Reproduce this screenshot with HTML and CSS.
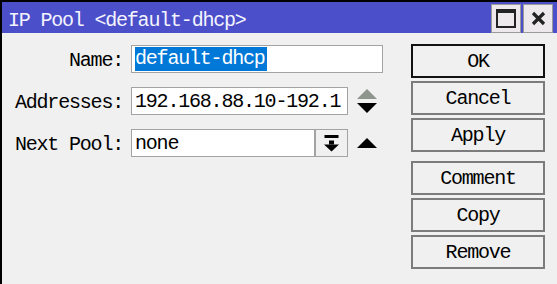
FILE: index.html
```html
<!DOCTYPE html>
<html lang="en">
<head>
  <meta charset="UTF-8">
  <title>IP Pool &lt;default-dhcp&gt;</title>
  <link rel="stylesheet" href="styles.css">
</head>
<body>
  <div class="window">
    <div class="titlebar">
      <span class="title">IP Pool &lt;default-dhcp&gt;</span>
      <div class="title-buttons">
        <button class="tb-btn" title="Maximize">
          <svg width="20" height="19" viewBox="0 0 20 19">
            <rect x="1" y="1" width="18" height="17" fill="none" stroke="#222" stroke-width="2"/>
            <rect x="1" y="1" width="18" height="3" fill="#222"/>
          </svg>
        </button>
        <button class="tb-btn" title="Close">
          <svg width="15" height="15" viewBox="0 0 15 15">
            <path d="M2 2 L13 13 M13 2 L2 13" stroke="#222" stroke-width="3.2" fill="none"/>
          </svg>
        </button>
      </div>
    </div>

    <div class="content">
      <div class="form">
        <div class="row">
          <label class="label">Name:</label>
          <div class="field field-name"><span class="selected">default-dhcp</span></div>
        </div>
        <div class="row">
          <label class="label">Addresses:</label>
          <div class="field field-addr">192.168.88.10-192.1</div>
          <svg class="side-icon" width="20" height="25" viewBox="0 0 20 25">
            <polygon points="0,10 10,0 20,10" fill="#8d958d"/>
            <polygon points="0,14 20,14 10,24" fill="#000"/>
          </svg>
        </div>
        <div class="row">
          <label class="label">Next Pool:</label>
          <div class="field field-pool">none</div>
          <div class="dropdown">
            <svg width="16" height="17" viewBox="0 0 16 17">
              <rect x="0.5" y="0" width="14" height="3" fill="#000"/>
              <rect x="5" y="5.5" width="5" height="4" fill="#000"/>
              <polygon points="0,9.5 15,9.5 7.5,16.5" fill="#000"/>
            </svg>
          </div>
          <svg class="side-icon" width="20" height="11" viewBox="0 0 20 11">
            <polygon points="0,10 10,0 20,10" fill="#000"/>
          </svg>
        </div>
      </div>

      <div class="actions">
        <button class="btn btn-default">OK</button>
        <button class="btn">Cancel</button>
        <button class="btn">Apply</button>
        <button class="btn group-start">Comment</button>
        <button class="btn">Copy</button>
        <button class="btn">Remove</button>
      </div>
    </div>
  </div>
</body>
</html>
```

FILE: styles.css
```css
body {
  margin: 0;
  padding: 0;
  background-color: #f0f0f0;
  font-family: "Liberation Mono", "Noto Sans CJK SC", monospace;
  font-size: 20px;
  letter-spacing: -1.2px;
  color: #000;
  overflow: hidden;
}

.window {
  width: 555px;
  height: 282px;
  border-left: 2px solid #000;
  border-top: 2px solid #000;
  background: #f0f0f0;
}

.titlebar {
  height: 31px;
  background: #4b4fc9;
  display: flex;
  justify-content: space-between;
  align-items: flex-start;
}

.title {
  color: #f4f4ff;
  padding-left: 6px;
  padding-top: 3px;
  line-height: 31px;
}

.title-buttons {
  display: flex;
  gap: 2px;
  padding-top: 2px;
  padding-right: 4px;
}

.tb-btn {
  width: 30px;
  height: 29px;
  padding: 0;
  background: #ece8ec;
  border: 1px solid #9a9a9a;
  display: flex;
  align-items: center;
  justify-content: center;
}

.content {
  display: flex;
  padding-top: 11px;
}

.form {
  margin-top: 1px;
  display: flex;
  flex-direction: column;
  gap: 14px;
}

.row {
  display: flex;
  align-items: center;
  height: 28px;
}

.label {
  width: 121px;
  margin-right: 8px;
  text-align: right;
  white-space: nowrap;
  padding-top: 2px;
}

.field {
  height: 28px;
  box-sizing: border-box;
  background: #fff;
  border: 1px solid #a3a3a3;
  padding-left: 3px;
  line-height: 27px;
  white-space: nowrap;
  overflow: hidden;
}

.field-name {
  width: 252px;
}

.field-addr {
  width: 217px;
}

.field-pool {
  width: 184px;
}

.selected {
  display: inline-block;
  background: #0078d7;
  color: #fff;
  line-height: 24px;
  padding-right: 2px;
  vertical-align: top;
  margin-top: 1px;
}

.dropdown {
  width: 33px;
  height: 28px;
  box-sizing: border-box;
  background: #f0f0f0;
  border: 1px solid #a3a3a3;
  display: flex;
  align-items: center;
  justify-content: center;
}

.side-icon {
  margin-left: 9px;
}

.actions {
  margin-left: 28px;
  display: flex;
  flex-direction: column;
  gap: 3px;
}

.btn {
  width: 134px;
  height: 34px;
  box-sizing: border-box;
  background: #f0f0f0;
  border: 2px solid #7c7c7c;
  font-family: inherit;
  font-size: 20px;
  letter-spacing: -1.2px;
  color: #000;
  padding: 0;
  cursor: pointer;
}

.btn-default {
  border-color: #111;
}

.group-start {
  margin-top: 6px;
}
```
